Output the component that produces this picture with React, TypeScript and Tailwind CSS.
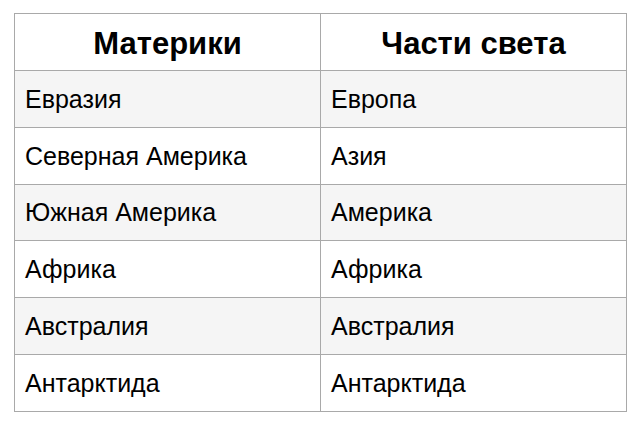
const rows: [string, string][] = [
  ['Евразия', 'Европа'],
  ['Северная Америка', 'Азия'],
  ['Южная Америка', 'Америка'],
  ['Африка', 'Африка'],
  ['Австралия', 'Австралия'],
  ['Антарктида', 'Антарктида'],
];

export default function App() {
  return (
    <div className="w-[644px] h-[428px] bg-white pt-[13px] pl-[14px] font-['Liberation_Sans',Arial,sans-serif] text-black">
      <table className="w-[613px] border-collapse table-fixed">
        <thead>
          <tr className="h-[57px]">
            <th className="border border-[#a9a9a9] text-[31px] leading-[36px] font-bold text-center align-middle pt-[3px]">
              Материки
            </th>
            <th className="border border-[#a9a9a9] text-[31px] leading-[36px] font-bold text-center align-middle pt-[3px]">
              Части света
            </th>
          </tr>
        </thead>
        <tbody>
          {rows.map(([a, b], i) => (
            <tr key={a} className={`h-[56.8px] ${i % 2 === 0 ? 'bg-[#f5f5f5]' : 'bg-white'}`}>
              <td className="border border-[#a9a9a9] text-[25px] leading-[30px] pl-[10px] pr-[10px] align-middle">{a}</td>
              <td className="border border-[#a9a9a9] text-[25px] leading-[30px] pl-[10px] pr-[10px] align-middle">{b}</td>
            </tr>
          ))}
        </tbody>
      </table>
    </div>
  );
}
